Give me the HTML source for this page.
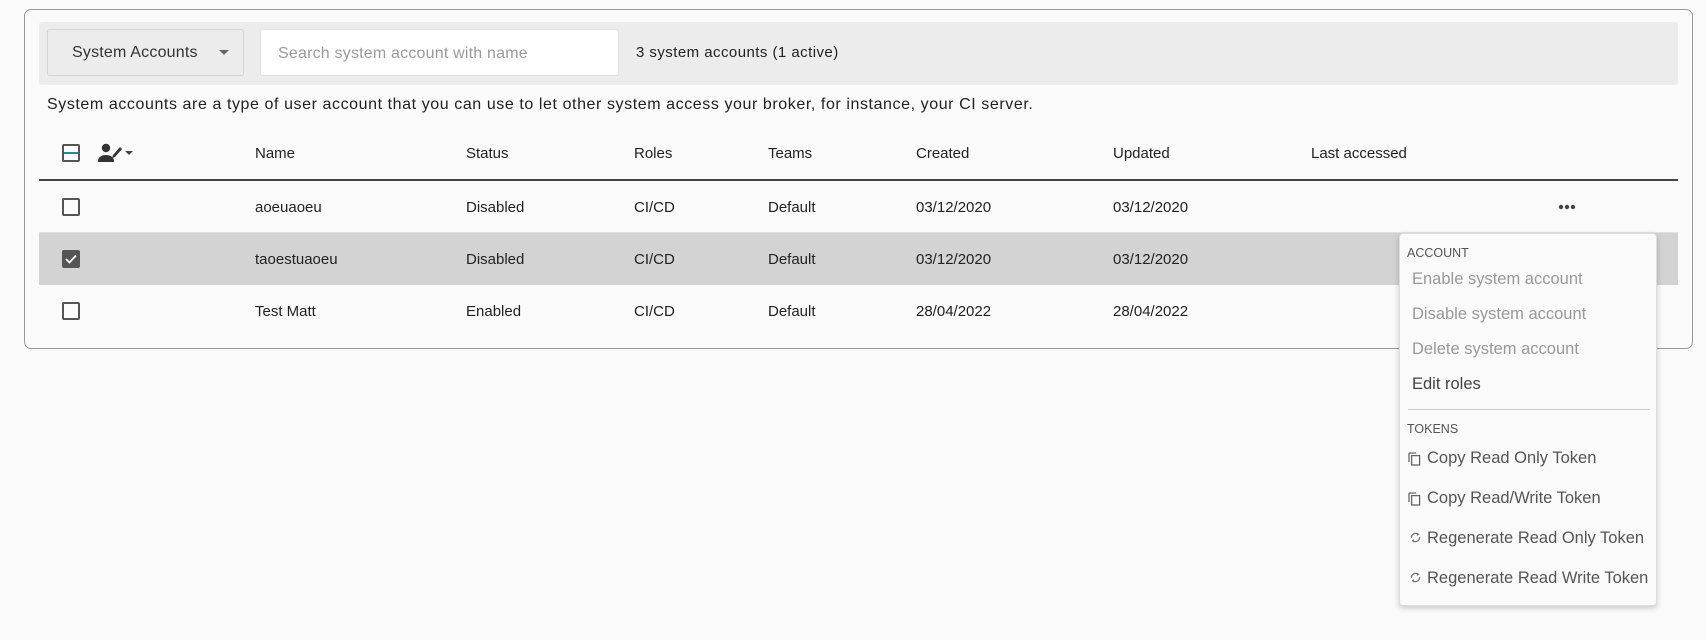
<!DOCTYPE html>
<html><head><meta charset="utf-8"><style>
*{box-sizing:border-box;margin:0;padding:0}
body{width:1706px;height:640px;background:#fafafa;font-family:"Liberation Sans",sans-serif;color:#222;position:relative;overflow:hidden}
.abs{position:absolute}
.card{left:24px;top:9px;width:1669px;height:340px;border:1px solid #9a9a9a;border-radius:7px}
.tool{left:39px;top:22px;width:1639px;height:63px;background:#ececec;border-radius:3px}
.dd{left:47px;top:29px;width:197px;height:47px;border:1px solid #d4d4d4;border-radius:3px;background:#ececec;font-size:16px;color:#333;padding:14px 0 0 24px;letter-spacing:0.2px}
.dd:after{content:"";position:absolute;left:171px;top:20px;border:5px solid transparent;border-top-color:#666;border-bottom:0}
.search{left:260px;top:29px;width:359px;height:47px;background:#fff;border:1px solid #e0e0e0;border-radius:3px;font-size:16px;color:#9a9a9a;padding:15px 0 0 17px;letter-spacing:0.2px}
.t{font-size:15px;line-height:18px;white-space:nowrap}
.cb{width:18px;height:18px;border:2px solid #555;border-radius:2px;background:#fafafa}
.menu{left:1399px;top:233px;width:258px;height:373px;background:#fafafa;border:1px solid #ddd;border-radius:4px;box-shadow:0 2px 6px rgba(0,0,0,.2)}
.mi{font-size:16.5px;color:#999;white-space:nowrap}
.lab{font-size:12.5px;color:#555}
</style></head><body>
<div class="abs card"></div>
<div class="abs tool"></div>
<div class="abs dd">System Accounts</div>
<div class="abs search">Search system account with name</div>
<div class="abs t" style="left:636px;top:44px;color:#222;letter-spacing:0.45px">3 system accounts (1 active)</div>
<div class="abs" style="left:47px;top:96px;font-size:16px;letter-spacing:0.58px;white-space:nowrap;color:#222">System accounts are a type of user account that you can use to let other system access your broker, for instance, your CI server.</div>
<div class="abs cb" style="left:62px;top:144px;background:linear-gradient(#fafafa 0,#fafafa 6px,#2a8b8b 6px,#2a8b8b 8px,#fafafa 8px)"></div>
<svg class="abs" style="left:98px;top:142px" width="36" height="22" viewBox="0 0 36 22"><circle cx="8" cy="6" r="4.2" fill="#333"/><path d="M0 19c0-4 4-6 8-6s8 2 8 6v1H0z" fill="#333"/><path d="M15 13l7-8 2 2-7 8-3 1z" fill="#333"/><path d="M30 11h8l-4 4z" fill="#444" transform="translate(-3 -2)"/></svg>
<div class="abs t" style="left:255px;top:145px">Name</div>
<div class="abs t" style="left:466px;top:145px">Status</div>
<div class="abs t" style="left:634px;top:145px">Roles</div>
<div class="abs t" style="left:768px;top:145px">Teams</div>
<div class="abs t" style="left:916px;top:145px">Created</div>
<div class="abs t" style="left:1113px;top:145px">Updated</div>
<div class="abs t" style="left:1311px;top:145px">Last accessed</div>
<div class="abs" style="left:39px;top:179px;width:1639px;height:2px;background:#444"></div>
<div class="abs" style="left:39px;top:232px;width:1639px;height:1px;background:#e2e2e2"></div>
<div class="abs" style="left:39px;top:233px;width:1639px;height:52px;background:#d3d3d3"></div>
<div class="abs cb" style="left:62px;top:198px"></div>
<div class="abs cb" style="left:62px;top:250px;background:#555;border-color:#555"><svg width="14" height="14" viewBox="0 0 14 14" style="display:block"><path d="M2 7l3.5 3.5L12 3.5" stroke="#fff" stroke-width="1.8" fill="none"/></svg></div>
<div class="abs cb" style="left:62px;top:302px"></div>
<div class="abs t" style="left:255px;top:199px">aoeuaoeu</div><div class="abs t" style="left:466px;top:199px">Disabled</div><div class="abs t" style="left:634px;top:199px">CI/CD</div><div class="abs t" style="left:768px;top:199px">Default</div><div class="abs t" style="left:916px;top:199px">03/12/2020</div><div class="abs t" style="left:1113px;top:199px">03/12/2020</div>
<div class="abs t" style="left:255px;top:251px">taoestuaoeu</div><div class="abs t" style="left:466px;top:251px">Disabled</div><div class="abs t" style="left:634px;top:251px">CI/CD</div><div class="abs t" style="left:768px;top:251px">Default</div><div class="abs t" style="left:916px;top:251px">03/12/2020</div><div class="abs t" style="left:1113px;top:251px">03/12/2020</div>
<div class="abs t" style="left:255px;top:303px">Test Matt</div><div class="abs t" style="left:466px;top:303px">Enabled</div><div class="abs t" style="left:634px;top:303px">CI/CD</div><div class="abs t" style="left:768px;top:303px">Default</div><div class="abs t" style="left:916px;top:303px">28/04/2022</div><div class="abs t" style="left:1113px;top:303px">28/04/2022</div>
<svg class="abs" style="left:1558px;top:204px" width="18" height="6"><circle cx="3" cy="3" r="2.2" fill="#444"/><circle cx="9" cy="3" r="2.2" fill="#444"/><circle cx="15" cy="3" r="2.2" fill="#444"/></svg>
<div class="abs menu">
<div class="abs lab" style="left:7px;top:12px">ACCOUNT</div>
<div class="abs mi" style="left:12px;top:36px">Enable system account</div>
<div class="abs mi" style="left:12px;top:71px">Disable system account</div>
<div class="abs mi" style="left:12px;top:106px">Delete system account</div>
<div class="abs mi" style="left:12px;top:141px;color:#444">Edit roles</div>
<div class="abs" style="left:8px;top:175px;width:242px;height:1px;background:#ccc"></div>
<div class="abs lab" style="left:7px;top:188px">TOKENS</div>
<svg class="abs" style="left:8px;top:218px" width="13" height="14" viewBox="0 0 13 14"><path d="M1 1h7M1 1v9" stroke="#666" stroke-width="1.3" fill="none"/><rect x="3.6" y="3.6" width="8" height="9.4" stroke="#666" stroke-width="1.3" fill="none"/></svg>
<div class="abs mi" style="left:27px;top:215px;color:#555">Copy Read Only Token</div>
<svg class="abs" style="left:8px;top:258px" width="13" height="14" viewBox="0 0 13 14"><path d="M1 1h7M1 1v9" stroke="#666" stroke-width="1.3" fill="none"/><rect x="3.6" y="3.6" width="8" height="9.4" stroke="#666" stroke-width="1.3" fill="none"/></svg>
<div class="abs mi" style="left:27px;top:255px;color:#555">Copy Read/Write Token</div>
<svg class="abs" style="left:9px;top:297px" width="13" height="13" viewBox="0 0 13 13"><path d="M2.5 7A4 4 0 0 1 9 3.3M10.5 6A4 4 0 0 1 4 9.7" stroke="#777" stroke-width="1.3" fill="none"/><path d="M8 1.5l2.5 1.8L8 5zM5 8l-2.5 1.8L5 11.5z" fill="#777"/></svg>
<div class="abs mi" style="left:27px;top:295px;color:#555">Regenerate Read Only Token</div>
<svg class="abs" style="left:9px;top:337px" width="13" height="13" viewBox="0 0 13 13"><path d="M2.5 7A4 4 0 0 1 9 3.3M10.5 6A4 4 0 0 1 4 9.7" stroke="#777" stroke-width="1.3" fill="none"/><path d="M8 1.5l2.5 1.8L8 5zM5 8l-2.5 1.8L5 11.5z" fill="#777"/></svg>
<div class="abs mi" style="left:27px;top:335px;color:#555">Regenerate Read Write Token</div>
</div>
</body></html>
